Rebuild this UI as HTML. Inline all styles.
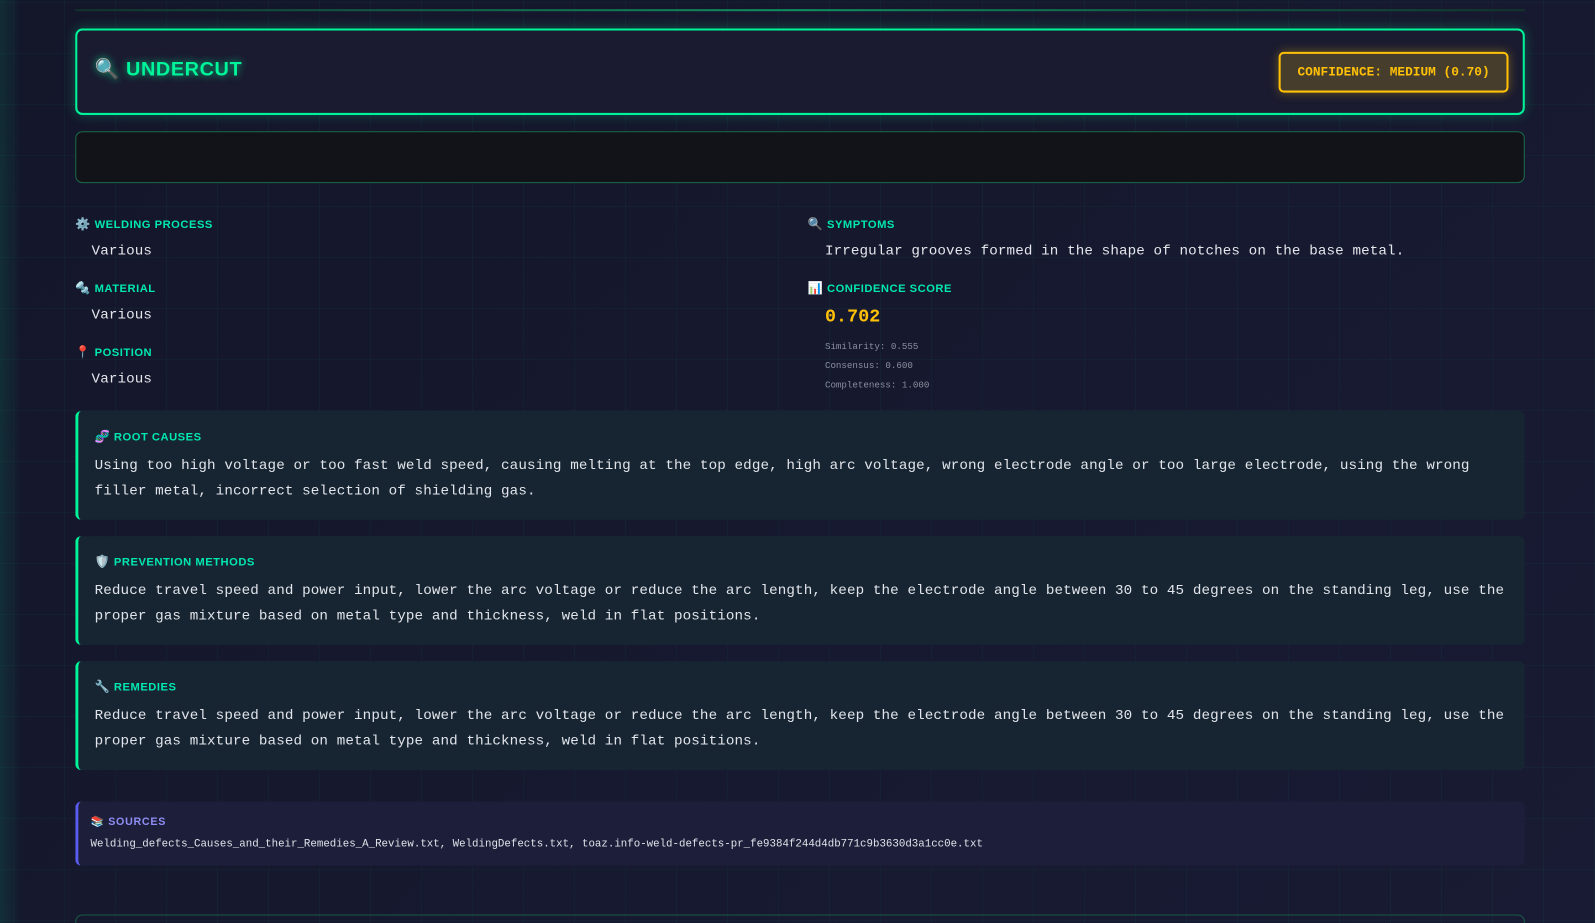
<!DOCTYPE html>
<html><head><meta charset="utf-8"><style>
*{box-sizing:border-box;margin:0;padding:0}
html,body{width:1595px;height:923px;overflow:hidden}
body{background:#151729;background-image:linear-gradient(rgba(0,255,157,0.035) 1px,transparent 1px),linear-gradient(90deg,rgba(0,255,157,0.035) 1px,transparent 1px),linear-gradient(135deg,#14162a,#181b33);background-size:51px 51px,51px 51px,100% 100%;background-position:0 2px,13px 0,0 0;font-family:"Liberation Mono",monospace;color:#dfe3ea;position:relative}
#w{position:absolute;left:0;top:0;width:1568px;height:908px;transform:scale(1.0172);transform-origin:0 0}
.glowL{position:absolute;left:0;top:0;bottom:0;width:22px;background:linear-gradient(90deg,rgba(0,255,157,0.10),transparent)}
.topline{position:absolute;left:74px;top:9px;width:1425px;height:2px;background:linear-gradient(90deg,#12332c,#0f8f60 50%,#12332c);}
.hdr{position:absolute;left:74px;top:28px;width:1425px;height:85px;border:2px solid #00f59a;border-radius:7px;background:#1a1b30;box-shadow:0 0 12px rgba(0,255,157,0.25)}
.title{position:absolute;left:17px;top:26px;font:bold 19.5px "Liberation Sans",sans-serif;color:#00f59a;letter-spacing:0.6px;text-shadow:0 0 8px rgba(0,255,157,0.7)}
.badge{position:absolute;left:1181px;top:21px;width:226px;height:40px;border:2px solid #ffc107;border-radius:5px;background:#463d2c;color:#ffc107;font:bold 12.6px "Liberation Mono",monospace;text-align:center;line-height:36px;box-shadow:0 0 10px rgba(255,193,7,0.35)}
.empty{position:absolute;left:74px;top:129px;width:1425px;height:51px;border:1px solid #1c6a49;border-radius:7px;background:#121319}
.lbl{position:absolute;font:bold 11px "Liberation Sans","DejaVu Sans",sans-serif;color:#00e8b0;letter-spacing:0.5px}
.ic{display:inline-block;width:16px;font-size:12px;margin-right:3px}
.val{position:absolute;font-size:14px;letter-spacing:0.1px;color:#e4e6ec}
.sm{position:absolute;font-size:9px;color:#8a8f9e}
.card{position:absolute;left:74px;width:1425px;border-left:3px solid #00f59a;border-radius:6px;background:#172533;padding:0 0 0 16px}
.card .lbl{position:static;margin-top:18px;display:block}
.card p{font-size:14px;letter-spacing:0.1px;line-height:24.5px;margin-top:10px;color:#e1e4ea}
.src{position:absolute;left:74px;top:788px;width:1425px;height:63px;border-left:3px solid #5a5cf0;border-radius:6px;background:#1c1e3a;padding-left:12px}
.bot{position:absolute;left:74px;top:899px;width:1425px;height:40px;border:1px solid #1a5a46;border-radius:7px}
</style></head><body>
<div id="w">
<div class="glowL"></div>
<div class="topline"></div>
<div class="hdr"><div class="title">🔍 UNDERCUT</div><div class="badge">CONFIDENCE: MEDIUM (0.70)</div></div>
<div class="empty"></div>

<div class="lbl" style="left:74px;top:213px"><span class="ic">⚙️</span>WELDING PROCESS</div>
<div class="val" style="left:90px;top:239px">Various</div>
<div class="lbl" style="left:74px;top:276px"><span class="ic">🔩</span>MATERIAL</div>
<div class="val" style="left:90px;top:302px">Various</div>
<div class="lbl" style="left:74px;top:339px"><span class="ic">📍</span>POSITION</div>
<div class="val" style="left:90px;top:365px">Various</div>

<div class="lbl" style="left:794px;top:213px"><span class="ic">🔍</span>SYMPTOMS</div>
<div class="val" style="left:811px;top:239px">Irregular grooves formed in the shape of notches on the base metal.</div>
<div class="lbl" style="left:794px;top:276px"><span class="ic">📊</span>CONFIDENCE SCORE</div>
<div class="val" style="left:811px;top:302px;font-size:18px;font-weight:bold;color:#ffc107">0.702</div>
<div class="sm" style="left:811px;top:336px">Similarity: 0.555</div>
<div class="sm" style="left:811px;top:355px">Consensus: 0.600</div>
<div class="sm" style="left:811px;top:374px">Completeness: 1.000</div>

<div class="card" style="top:404px;height:107px"><span class="lbl"><span class="ic">🧬</span>ROOT CAUSES</span><p>Using too high voltage or too fast weld speed, causing melting at the top edge, high arc voltage, wrong electrode angle or too large electrode, using the wrong filler metal, incorrect selection of shielding gas.</p></div>
<div class="card" style="top:527px;height:107px"><span class="lbl"><span class="ic">🛡️</span>PREVENTION METHODS</span><p>Reduce travel speed and power input, lower the arc voltage or reduce the arc length, keep the electrode angle between 30 to 45 degrees on the standing leg, use the proper gas mixture based on metal type and thickness, weld in flat positions.</p></div>
<div class="card" style="top:650px;height:107px"><span class="lbl"><span class="ic">🔧</span>REMEDIES</span><p>Reduce travel speed and power input, lower the arc voltage or reduce the arc length, keep the electrode angle between 30 to 45 degrees on the standing leg, use the proper gas mixture based on metal type and thickness, weld in flat positions.</p></div>

<div class="src"><div style="font:bold 10.5px 'Liberation Sans',sans-serif;color:#8e8ef5;letter-spacing:0.7px;margin-top:13px">📚 SOURCES</div><div style="font-size:10.6px;color:#e1e4ea;margin-top:10px">Welding_defects_Causes_and_their_Remedies_A_Review.txt, WeldingDefects.txt, toaz.info-weld-defects-pr_fe9384f244d4db771c9b3630d3a1cc0e.txt</div></div>
<div class="bot"></div>
</div>
</body></html>
